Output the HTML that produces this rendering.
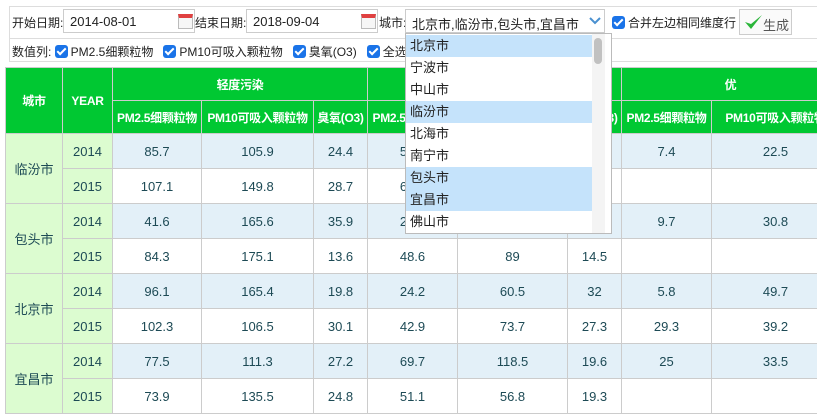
<!DOCTYPE html>
<html><head><meta charset="utf-8"><style>
*{box-sizing:border-box}
body{margin:0;width:817px;height:420px;overflow:hidden;background:#fff;font-family:"Liberation Sans","Noto Sans CJK SC",sans-serif;font-size:12px;color:#222;position:relative}
.a{position:absolute}
.box{left:9px;top:6px;width:830px;height:56px;border:1px solid #ddd}
.inp{height:24px;border:1px solid #ccc;background:#fff;padding:4px 6px;font-size:13px}
.cb{display:inline-block;width:13px;height:13px;background:#1a73e8;border-radius:3px;vertical-align:-2px;position:relative;margin-right:3px}
.cb:after{content:"";position:absolute;left:4px;top:1px;width:3px;height:7px;border:solid #fff;border-width:0 2px 2px 0;transform:rotate(45deg)}
.cal{width:15px;height:15px;border:1px solid #bbb;border-top:4px solid #e04040;background:#f6f6f6}
table{position:absolute;left:5px;top:67px;border-collapse:collapse;table-layout:fixed;width:834px}
td,th{border:1px solid #ccc;text-align:center;padding:0;font-size:13px}
th{background:#00c832;color:#fff;font-weight:bold;font-size:12px;white-space:nowrap;overflow:hidden;letter-spacing:-0.3px}
td{color:#1d4a55;height:35px}
.c{background:#dcfcd0}
.b td.v{background:#e3f0f8}
.dd{left:405px;top:33px;width:207px;height:201px;background:#fff;border:1px solid #bbb;overflow:hidden}
.dd div{height:22px;line-height:22px;padding-left:4px;width:186px;font-size:13px;color:#222}
.s{background:#c5e3fb}
</style></head><body>
<div class="a box"></div>
<div class="a" style="left:9px;top:38px;width:830px;border-top:1px solid #ddd"></div>
<div class="a" style="left:12px;top:14px">开始日期:</div>
<div class="a inp" style="left:63px;top:9px;width:132px">2014-08-01</div>
<div class="a cal" style="left:178px;top:14px"></div>
<div class="a" style="left:195px;top:14px">结束日期:</div>
<div class="a inp" style="left:246px;top:9px;width:132px">2018-09-04</div>
<div class="a cal" style="left:361px;top:14px"></div>
<div class="a" style="left:379px;top:14px">城市:</div>
<div class="a inp" style="left:405px;top:9px;width:200px">北京市,临汾市,包头市,宜昌市</div>
<svg class="a" style="left:589px;top:17px" width="12" height="8"><path d="M1 1 L6 6 L11 1" fill="none" stroke="#4a90d0" stroke-width="2"/></svg>
<div class="a" style="left:612px;top:14px"><span class="cb"></span>合并左边相同维度行</div>
<div class="a" style="left:739px;top:9px;width:53px;height:26px;border:1px solid #ccc;background:#fafafa"></div>
<svg class="a" style="left:743px;top:13px" width="20" height="18"><path d="M2 9 L8 16 L19 2 L8 11 Z" fill="#2bb63a"/></svg>
<div class="a" style="left:763px;top:15px;color:#555;font-size:13px">生成</div>
<div class="a" style="left:12px;top:43px">数值列: <span class="cb"></span>PM2.5细颗粒物 &nbsp;&nbsp;<span class="cb"></span>PM10可吸入颗粒物 &nbsp;&nbsp;<span class="cb"></span>臭氧(O3) &nbsp;&nbsp;<span class="cb"></span>全选</div>
<table>
<colgroup><col style="width:57px"><col style="width:50px"><col style="width:89px"><col style="width:112px"><col style="width:54px"><col style="width:90px"><col style="width:110px"><col style="width:54px"><col style="width:90px"><col style="width:128px"></colgroup>
<tr style="height:33px"><th rowspan="2">城市</th><th rowspan="2">YEAR</th><th colspan="3">轻度污染</th><th colspan="3">良</th><th colspan="2">优</th></tr>
<tr style="height:33px"><th>PM2.5细颗粒物</th><th>PM10可吸入颗粒物</th><th>臭氧(O3)</th><th>PM2.5细颗粒物</th><th>PM10可吸入颗粒物</th><th>臭氧(O3)</th><th>PM2.5细颗粒物</th><th>PM10可吸入颗粒物</th></tr>
<tr class="b"><td rowspan="2" class="c">临汾市</td><td class="c">2014</td><td class="v">85.7</td><td class="v">105.9</td><td class="v">24.4</td><td class="v">55.3</td><td class="v">88.1</td><td class="v">23</td><td class="v">7.4</td><td class="v">22.5</td></tr>
<tr><td class="c">2015</td><td>107.1</td><td>149.8</td><td>28.7</td><td>61.2</td><td>99.3</td><td>21.1</td><td></td><td></td></tr>
<tr class="b"><td rowspan="2" class="c">包头市</td><td class="c">2014</td><td class="v">41.6</td><td class="v">165.6</td><td class="v">35.9</td><td class="v">22.1</td><td class="v">90.2</td><td class="v">31.1</td><td class="v">9.7</td><td class="v">30.8</td></tr>
<tr><td class="c">2015</td><td>84.3</td><td>175.1</td><td>13.6</td><td>48.6</td><td>89</td><td>14.5</td><td></td><td></td></tr>
<tr class="b"><td rowspan="2" class="c">北京市</td><td class="c">2014</td><td class="v">96.1</td><td class="v">165.4</td><td class="v">19.8</td><td class="v">24.2</td><td class="v">60.5</td><td class="v">32</td><td class="v">5.8</td><td class="v">49.7</td></tr>
<tr><td class="c">2015</td><td>102.3</td><td>106.5</td><td>30.1</td><td>42.9</td><td>73.7</td><td>27.3</td><td>29.3</td><td>39.2</td></tr>
<tr class="b"><td rowspan="2" class="c">宜昌市</td><td class="c">2014</td><td class="v">77.5</td><td class="v">111.3</td><td class="v">27.2</td><td class="v">69.7</td><td class="v">118.5</td><td class="v">19.6</td><td class="v">25</td><td class="v">33.5</td></tr>
<tr><td class="c">2015</td><td>73.9</td><td>135.5</td><td>24.8</td><td>51.1</td><td>56.8</td><td>19.3</td><td></td><td></td></tr>
</table>
<div class="a dd">
<div class="s" style="margin-top:1px">北京市</div><div>宁波市</div><div>中山市</div><div class="s">临汾市</div><div>北海市</div><div>南宁市</div><div class="s">包头市</div><div class="s">宜昌市</div><div>佛山市</div>
</div>
<div class="a" style="left:592px;top:34px;width:13px;height:199px;background:#f4f4f4"></div>
<div class="a" style="left:594px;top:38px;width:8px;height:26px;background:#c1c1c1;border-radius:4px"></div>
</body></html>
